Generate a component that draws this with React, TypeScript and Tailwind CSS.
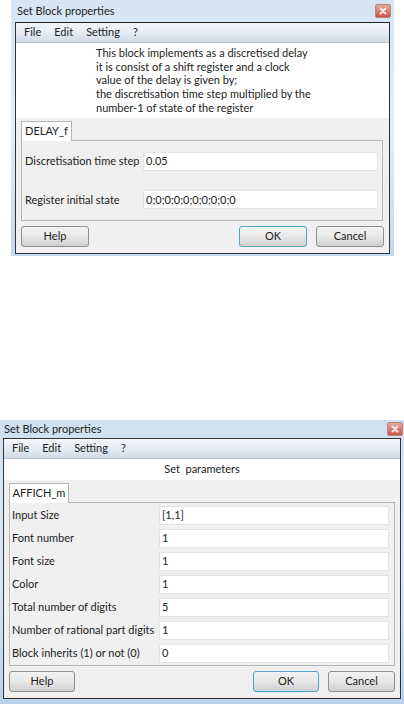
import React from 'react'

const font = { fontFamily: 'Lato, "Open Sans", sans-serif' }

const CloseBox: React.FC = () => (
  <div className="w-[16px] h-[14px] rounded-[2px] bg-gradient-to-b from-[#e3a79d] to-[#c8564a] border border-[#b9857f] flex items-center justify-center">
    <svg width="8" height="8" viewBox="0 0 8 8">
      <path d="M1.5 1.5 L6.5 6.5 M6.5 1.5 L1.5 6.5" stroke="#f6eeee" strokeWidth="2" strokeLinecap="round" />
    </svg>
  </div>
)

const Button: React.FC<{ label: string; width: string; active?: boolean }> = ({ label, width, active }) => (
  <div className={`${width} h-[21px] rounded-[3px] border ${active ? 'border-[#52a3c9]' : 'border-[#8e8f8f]'} bg-gradient-to-b from-[#f3f3f3] via-[#e8e8e8] to-[#cfcfcf] flex items-center justify-center text-[11px] text-[#222]`}>
    {label}
  </div>
)

const Menu: React.FC = () => (
  <div className="h-[20px] shrink-0 flex items-center gap-[13px] pl-[8px] text-[11px] text-[#222] bg-gradient-to-b from-[#f4f7fb] via-[#e6ecf5] to-[#d3dbe8] border-b border-[#b9c0c8]">
    <span>File</span>
    <span>Edit</span>
    <span>Setting</span>
    <span>?</span>
  </div>
)

const Field: React.FC<{ label: string; value: string; labelWidth: string; height: string }> = ({ label, value, labelWidth, height }) => (
  <div className={`flex items-center ${height}`}>
    <span className={`${labelWidth} shrink-0 text-[11px] text-[#222] whitespace-nowrap`}>{label}</span>
    <div className="flex-1 h-[19px] bg-white border border-[#e4e4e4] flex items-center pl-[2px] text-[11px] text-[#222]">{value}</div>
  </div>
)

const delayFields = [
  { label: 'Discretisation time step', value: '0.05' },
  { label: 'Register initial state', value: '0;0;0;0;0;0;0;0;0;0' },
]

const affichFields = [
  { label: 'Input Size', value: '[1,1]' },
  { label: 'Font number', value: '1' },
  { label: 'Font size', value: '1' },
  { label: 'Color', value: '1' },
  { label: 'Total number of digits', value: '5' },
  { label: 'Number of rational part digits', value: '1' },
  { label: 'Block inherits (1) or not (0)', value: '0' },
]

export default function App() {
  return (
    <div className="w-[404px] h-[704px] bg-white overflow-hidden flex flex-col" style={font}>
      {/* first dialog */}
      <div className="ml-[11px] w-[383px] h-[256px] shrink-0 flex flex-col px-[4px] pb-[2px] bg-gradient-to-b from-[#d5e5f3] via-[#e3eef7] to-[#c3d8ec]">
        <div className="h-[22px] shrink-0 flex items-center justify-between -ml-[1px] -mr-[1px] text-[11px] text-[#222]">
          <span className="ml-[3px]">Set Block properties</span>
          <CloseBox />
        </div>
        <div className="flex-1 flex flex-col border border-[#333] border-t-[#222] bg-[#f0f0f0] min-h-0">
          <Menu />
          <div className="h-[75px] shrink-0 bg-white pl-[80px] pt-[3px] text-[11px] leading-[13.7px] text-[#222]">
            <div>This block implements as a discretised delay</div>
            <div>it is consist of a shift register and a clock</div>
            <div>value of the delay is given by;</div>
            <div>the discretisation time step multiplied by the</div>
            <div>number-1 of state of the register</div>
          </div>
          <div className="flex-1 flex flex-col px-[5px] pt-[3px] min-h-0">
            <div className="h-[20px] shrink-0 w-[51px] bg-white border border-b-0 border-[#b5b5b5] flex items-center justify-center text-[11px] text-[#222] z-10 -mb-[1px]">DELAY_f</div>
            <div className="h-[81px] shrink-0 mr-[1px] border border-[#b5b5b5] flex flex-col pl-[3px] pr-[4px] pt-[1px]">
              {delayFields.map(f => (
                <Field key={f.label} label={f.label} value={f.value} labelWidth="w-[118px]" height="h-[38.5px]" />
              ))}
            </div>
            <div className="flex items-center mt-[5px]">
              <Button label="Help" width="w-[68px]" />
              <div className="flex-1" />
              <Button label="OK" width="w-[68px]" active />
              <div className="w-[9px]" />
              <Button label="Cancel" width="w-[68px]" />
            </div>
          </div>
        </div>
      </div>

      <div className="h-[164px] shrink-0" />

      {/* second dialog */}
      <div className="w-[404px] h-[284px] shrink-0 flex flex-col px-[3px] pb-[5px] bg-gradient-to-b from-[#cfe0f0] via-[#dde9f4] to-[#b9d1ea]">
        <div className="h-[18px] shrink-0 flex items-center justify-between -mx-[2px] text-[11px] text-[#222]">
          <span className="ml-[3px]">Set Block properties</span>
          <CloseBox />
        </div>
        <div className="flex-1 flex flex-col border border-[#333] bg-[#f0f0f0] min-h-0">
          <Menu />
          <div className="h-[21px] shrink-0 bg-white flex items-center justify-center text-[11px] text-[#222] whitespace-pre">Set  parameters</div>
          <div className="flex-1 flex flex-col px-[5px] pt-[3px] min-h-0">
            <div className="h-[20px] shrink-0 w-[60px] bg-white border border-b-0 border-[#b5b5b5] flex items-center justify-center text-[11px] text-[#222] z-10 -mb-[1px]">AFFICH_m</div>
            <div className="h-[164px] shrink-0 border border-[#b5b5b5] flex flex-col pl-[2px] pr-[5px] pt-[1px]">
              {affichFields.map(f => (
                <Field key={f.label} label={f.label} value={f.value} labelWidth="w-[147px]" height="h-[23px]" />
              ))}
            </div>
            <div className="flex items-center mt-[5px]">
              <Button label="Help" width="w-[66px]" />
              <div className="flex-1" />
              <Button label="OK" width="w-[66px]" active />
              <div className="w-[9px]" />
              <Button label="Cancel" width="w-[67px]" />
            </div>
          </div>
        </div>
      </div>
    </div>
  )
}
